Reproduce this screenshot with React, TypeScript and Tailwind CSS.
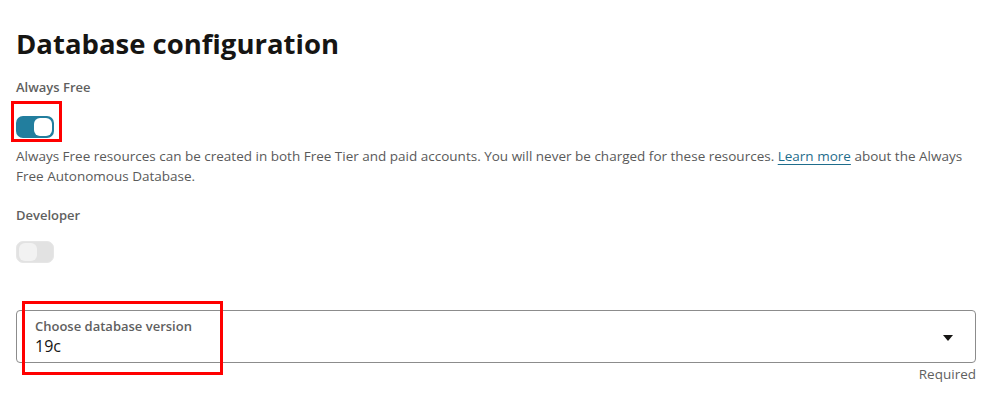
import { ReactNode } from 'react';

function Toggle({ on }: { on: boolean }) {
  return (
    <div
      className={`flex h-[22px] w-[38px] items-center rounded-[7px] p-[2px] ${
        on ? 'justify-end bg-[#227e9e]' : 'justify-start border border-[#e6e6e6] bg-[#e2e2e2]'
      }`}
    >
      <div className={`h-[18px] w-[18px] rounded-[6px] ${on ? 'bg-white' : 'bg-[#f2f2f2]'}`} />
    </div>
  );
}

function Marked({ children, className }: { children: ReactNode; className: string }) {
  return (
    <div className="relative">
      {children}
      <div className={`pointer-events-none absolute border-[3px] border-[#ff0000] ${className}`} />
    </div>
  );
}

export default function App() {
  return (
    <div className="min-h-screen bg-white px-4 pt-[24px] font-['Open_Sans',sans-serif]">
      <h1 className="text-[27.5px] font-bold leading-[40px] text-[#161513]">Database configuration</h1>

      <div className="mt-[14px] text-[13px] font-semibold leading-[18px] text-[#5f5f5f]">Always Free</div>
      <div className="mt-[20px] w-fit">
        <Marked className="-left-[5px] -top-[15px] h-[41px] w-[51px]">
          <Toggle on />
        </Marked>
      </div>
      <p className="mt-[8px] text-[13.5px] leading-[20px] text-[#5a5a5a]">
        Always Free resources can be created in both Free Tier and paid accounts. You will never be charged for these
        resources.{' '}
        <a href="#" className="text-[#1f6d8c] underline underline-offset-[3px]">
          Learn more
        </a>{' '}
        about the Always Free Autonomous Database.
      </p>

      <div className="mt-[20px] text-[13px] font-semibold leading-[18px] text-[#5f5f5f]">Developer</div>
      <div className="mt-[17px]">
        <Toggle on={false} />
      </div>

      <div className="mt-[47px] mr-[12px]">
        <Marked className="left-[6px] -top-[9px] h-[74px] w-[201px]">
          <div className="flex h-[53px] items-center justify-between rounded-[4px] border border-[#8c8c8c] pl-[18px] pr-[22px] pt-[2px]">
            <div className="flex flex-col">
              <span className="text-[13px] font-semibold leading-[17px] text-[#5f5f5f]">Choose database version</span>
              <span className="text-[16px] leading-[22px] text-[#161513]">19c</span>
            </div>
            <svg width="10" height="6" viewBox="0 0 10 6">
              <path d="M0 0 L10 0 L5 6 Z" fill="#161513" />
            </svg>
          </div>
        </Marked>
        <div className="mt-[2px] text-right text-[13.5px] leading-[18px] text-[#5f5f5f]">Required</div>
      </div>
    </div>
  );
}
